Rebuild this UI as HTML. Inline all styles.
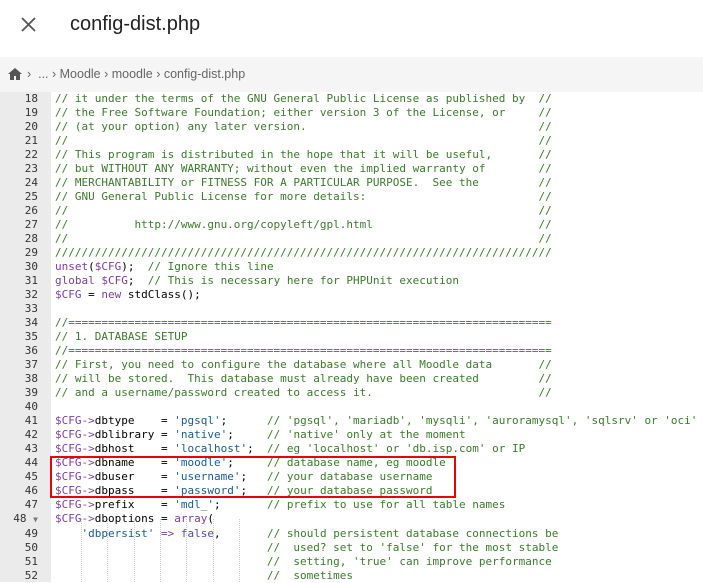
<!DOCTYPE html>
<html><head><meta charset="utf-8"><style>
body{margin:0;width:703px;height:582px;overflow:hidden;background:#fff;font-family:"Liberation Sans",Arial,sans-serif;position:relative}
.top{height:57px;position:relative}
.title{position:absolute;left:70px;top:13px;font-size:20px;color:#222}
.bc{position:absolute;top:57px;left:0;right:0;height:35px;background:#f5f5f5;font-size:12.5px;color:#666}
.bc span{position:absolute;top:10px}
.code{position:absolute;top:92px;left:0;right:0;bottom:0}
.gut{position:absolute;left:0;top:0;bottom:0;width:51px;background:#ebebeb}
pre{margin:0;font-family:"DejaVu Sans Mono",monospace;font-size:11px;line-height:14px;position:absolute;top:0;left:0;white-space:pre}
.n{display:inline-block;width:38px;text-align:right;color:#333;margin-right:17px}
.c{color:#3c7a2e}.v{color:#7a3f99}.s{color:#1b5b8a}.k{color:#7a3f99}.b{color:#4b47d8}
.box{position:absolute;left:50px;top:456px;width:402px;height:38px;border:2px solid #e8000b}
.guide{position:absolute;top:519px;height:63px;border-left:1px dotted #ccc}
</style></head><body>
<div class="top">
<svg style="position:absolute;left:21px;top:17px" width="15" height="15" viewBox="0 0 15 15"><path d="M1 1L14 14M14 1L1 14" stroke="#555" stroke-width="1.8"/></svg>
<div class="title">config-dist.php</div></div>
<div class="bc">
<svg style="position:absolute;left:8px;top:11px" width="14" height="12" viewBox="0 0 14 12"><path d="M7 0L0 6h2v6h4V8h2v4h4V6h2z" fill="#555"/></svg>
<span style="left:27px">›&nbsp; ... ›&nbsp;Moodle&nbsp;›&nbsp;moodle&nbsp;›&nbsp;config-dist.php</span></div>
<div class="code"><div class="gut"></div>
<div class="guide" style="left:81px;top:427px"></div><div class="guide" style="left:107px;top:427px"></div><div class="guide" style="left:134px;top:427px"></div><div class="guide" style="left:160px;top:427px"></div><div class="guide" style="left:186px;top:427px"></div><div class="guide" style="left:213px;top:427px"></div><div class="guide" style="left:239px;top:427px"></div>
<pre><span class="n">18</span><span class="c">// it under the terms of the GNU General Public License as published by  //</span>
<span class="n">19</span><span class="c">// the Free Software Foundation; either version 3 of the License, or     //</span>
<span class="n">20</span><span class="c">// (at your option) any later version.                                   //</span>
<span class="n">21</span><span class="c">//                                                                       //</span>
<span class="n">22</span><span class="c">// This program is distributed in the hope that it will be useful,       //</span>
<span class="n">23</span><span class="c">// but WITHOUT ANY WARRANTY; without even the implied warranty of        //</span>
<span class="n">24</span><span class="c">// MERCHANTABILITY or FITNESS FOR A PARTICULAR PURPOSE.  See the         //</span>
<span class="n">25</span><span class="c">// GNU General Public License for more details:                          //</span>
<span class="n">26</span><span class="c">//                                                                       //</span>
<span class="n">27</span><span class="c">//          http://www.gnu.org/copyleft/gpl.html                         //</span>
<span class="n">28</span><span class="c">//                                                                       //</span>
<span class="n">29</span><span class="c">///////////////////////////////////////////////////////////////////////////</span>
<span class="n">30</span><span class="k">unset</span>(<span class="v">$CFG</span>);  <span class="c">// Ignore this line</span>
<span class="n">31</span><span class="k">global</span> <span class="v">$CFG</span>;  <span class="c">// This is necessary here for PHPUnit execution</span>
<span class="n">32</span><span class="v">$CFG</span> = <span class="k">new</span> stdClass();
<span class="n">33</span>
<span class="n">34</span><span class="c">//=========================================================================</span>
<span class="n">35</span><span class="c">// 1. DATABASE SETUP</span>
<span class="n">36</span><span class="c">//=========================================================================</span>
<span class="n">37</span><span class="c">// First, you need to configure the database where all Moodle data       //</span>
<span class="n">38</span><span class="c">// will be stored.  This database must already have been created         //</span>
<span class="n">39</span><span class="c">// and a username/password created to access it.                         //</span>
<span class="n">40</span>
<span class="n">41</span><span class="v">$CFG-&gt;</span>dbtype    = <span class="s">'pgsql'</span>;      <span class="c">// 'pgsql', 'mariadb', 'mysqli', 'auroramysql', 'sqlsrv' or 'oci'</span>
<span class="n">42</span><span class="v">$CFG-&gt;</span>dblibrary = <span class="s">'native'</span>;     <span class="c">// 'native' only at the moment</span>
<span class="n">43</span><span class="v">$CFG-&gt;</span>dbhost    = <span class="s">'localhost'</span>;  <span class="c">// eg 'localhost' or 'db.isp.com' or IP</span>
<span class="n">44</span><span class="v">$CFG-&gt;</span>dbname    = <span class="s">'moodle'</span>;     <span class="c">// database name, eg moodle</span>
<span class="n">45</span><span class="v">$CFG-&gt;</span>dbuser    = <span class="s">'username'</span>;   <span class="c">// your database username</span>
<span class="n">46</span><span class="v">$CFG-&gt;</span>dbpass    = <span class="s">'password'</span>;   <span class="c">// your database password</span>
<span class="n">47</span><span class="v">$CFG-&gt;</span>prefix    = <span class="s">'mdl_'</span>;       <span class="c">// prefix to use for all table names</span>
<span class="n">48 <span style="font-size:8px;color:#777">▼</span></span><span class="v">$CFG-&gt;</span>dboptions = <span class="k">array</span>(
<span class="n">49</span>    <span class="s">'dbpersist'</span> <span class="k">=&gt;</span> <span class="b">false</span>,       <span class="c">// should persistent database connections be</span>
<span class="n">50</span>                                <span class="c">//  used? set to 'false' for the most stable</span>
<span class="n">51</span>                                <span class="c">//  setting, 'true' can improve performance</span>
<span class="n">52</span>                                <span class="c">//  sometimes</span>
</pre></div>
<div class="box"></div>
</body></html>
